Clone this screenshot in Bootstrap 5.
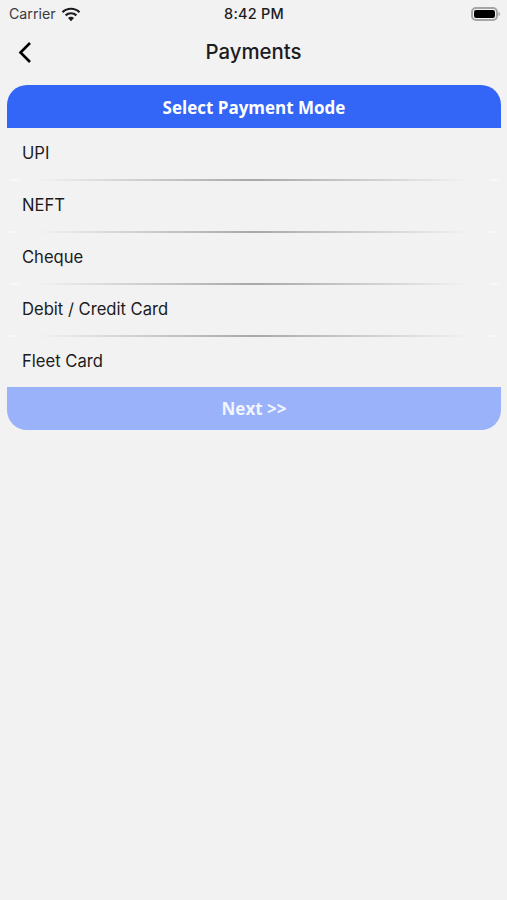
<!DOCTYPE html>
<html lang="en">
<head>
<meta charset="utf-8">
<meta name="viewport" content="width=device-width, initial-scale=1">
<link href="https://cdn.jsdelivr.net/npm/bootstrap@5.3.0/dist/css/bootstrap.min.css" rel="stylesheet">
<style>
html, body { background: #f2f2f3; height: 100%; }
body { font-family: Inter, "Liberation Sans", sans-serif; color: #1c1c1e; }
.status-row { height: 28px; padding: 0 6px 0 9px; }
.status-side { width: 110px; }
.carrier { font-size: 14.2px; color: #3a3a3c; line-height: 1; margin-right: 1px; }
.clock { font-size: 14.5px; font-weight: 500; line-height: 1; letter-spacing: .2px; margin-left: -2px; }
.nav-row { height: 49px; margin-bottom: 8px; }
.back-link { left: 18px; top: 50%; transform: translateY(-50%); line-height: 0; }
.nav-title { font-size: 20.4px; font-weight: 500; line-height: 1; }
.pay-panel { margin: 0 6px 0 7px; }
.pay-head { height: 43px; padding-top: 2px; background: #3366f6; border-radius: 20px 20px 0 0; font-family: "Open Sans", sans-serif; font-weight: 700; font-size: 17px; color: #fff; }
.pay-item { height: 52px; padding: 0 0 2px 15px; font-size: 16.6px; color: #1c1c1e; background: transparent; border: 0; border-radius: 0; }
.pay-item:last-child { height: 51px; padding-bottom: 0; }
.pay-rule { left: 0; right: 0; bottom: -1px; height: 2px; background: linear-gradient(to right, rgba(255,255,255,0), rgba(255,255,255,.6) 1.500%, rgba(255,255,255,0) 3%, rgba(150,150,150,0) 6%, rgba(150,150,150,.8) 50%, rgba(150,150,150,0) 94%, rgba(255,255,255,0) 97%, rgba(255,255,255,.6) 98.500%, rgba(255,255,255,0)); }
.pay-next { height: 43px; background: #99b2fa; border: 0; border-radius: 0 0 20px 20px; font-family: "Open Sans", sans-serif; font-weight: 700; font-size: 17px; color: #f2f5ff; }
.pay-next:disabled { background: #99b2fa; color: #f2f5ff; opacity: 1; }
</style>
</head>
<body>
<div class="status-row d-flex align-items-center justify-content-between">
  <div class="status-side d-flex align-items-center gap-1">
    <span class="carrier">Carrier</span>
    <svg width="20" height="15" viewBox="0 0 20 15" aria-hidden="true"><path d="M1.500 5.200a12.200 12.200 0 0 1 17 0" fill="none" stroke="#1c1c1e" stroke-width="2.200"/><path d="M4.600 8.400a7.800 7.800 0 0 1 10.800 0" fill="none" stroke="#1c1c1e" stroke-width="2.200"/><path d="M7 11a4 4 0 0 1 6 0l-3 3.200z" fill="#1c1c1e"/></svg>
  </div>
  <span class="clock">8:42 PM</span>
  <div class="status-side d-flex justify-content-end">
    <svg width="30" height="14" viewBox="0 0 30 14" aria-hidden="true"><rect x="1" y="1" width="25" height="12" rx="4" fill="none" stroke="#a5a5a7" stroke-width="2"/><rect x="3" y="3" width="21" height="8" rx="2.200" fill="#000"/><path d="M27.500 5v4c1-.3 1.600-1 1.600-2s-.6-1.700-1.600-2z" fill="#a5a5a7"/></svg>
  </div>
</div>
<div class="nav-row position-relative d-flex align-items-center justify-content-center">
  <a class="back-link position-absolute" href="#" aria-label="Back">
    <svg width="14" height="22" viewBox="0 0 14 22" aria-hidden="true"><path d="M12 1 2.500 10.500l9.500 9.500" fill="none" stroke="#000" stroke-width="2.600"/></svg>
  </a>
  <span class="nav-title">Payments</span>
</div>
<div class="pay-panel">
  <div class="pay-head d-flex align-items-center justify-content-center">Select Payment Mode</div>
  <div class="list-group list-group-flush">
    <div class="list-group-item pay-item position-relative d-flex align-items-center">UPI<span class="pay-rule position-absolute"></span></div>
    <div class="list-group-item pay-item position-relative d-flex align-items-center">NEFT<span class="pay-rule position-absolute"></span></div>
    <div class="list-group-item pay-item position-relative d-flex align-items-center">Cheque<span class="pay-rule position-absolute"></span></div>
    <div class="list-group-item pay-item position-relative d-flex align-items-center">Debit / Credit Card<span class="pay-rule position-absolute"></span></div>
    <div class="list-group-item pay-item position-relative d-flex align-items-center">Fleet Card</div>
  </div>
  <button class="btn pay-next w-100 d-flex align-items-center justify-content-center" type="button" disabled>Next &gt;&gt;</button>
</div>
<script src="https://cdn.jsdelivr.net/npm/bootstrap@5.3.0/dist/js/bootstrap.bundle.min.js"></script>
</body>
</html>
